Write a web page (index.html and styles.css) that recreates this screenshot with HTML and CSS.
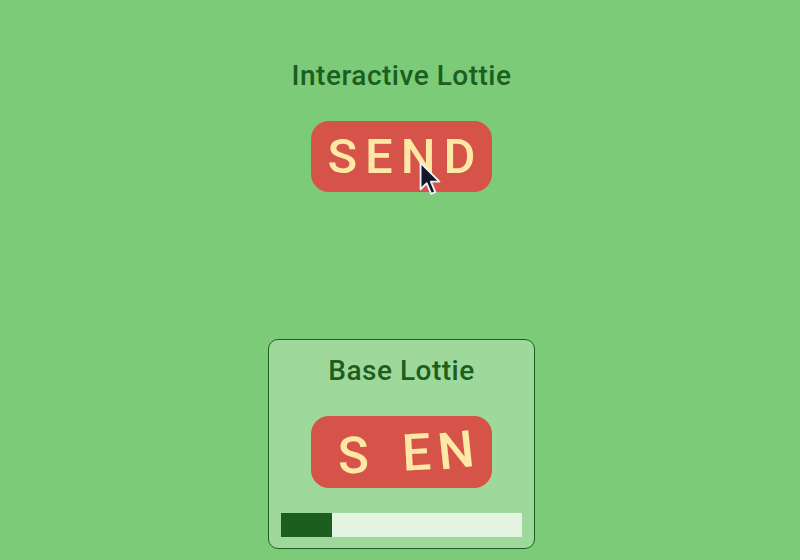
FILE: index.html
```html
<!DOCTYPE html>
<html>
<head>
<meta charset="utf-8">
<link rel="stylesheet" href="styles.css">
</head>
<body>
<div class="page">
  <section class="top">
    <h1 class="title">Interactive Lottie</h1>
    <div class="btn-wrap">
      <div class="send-btn">
        <span class="send-text">SEND</span>
      </div>
      <svg class="cursor" width="24" height="36" viewBox="0 0 13 21">
        <path d="M1 1 L1 16.5 L4.6 13 L7.2 19.2 L9.6 18.2 L7 12 L12 12 Z" fill="#111827" stroke="#eef2f7" stroke-width="1.1" stroke-linejoin="round"/>
      </svg>
    </div>
  </section>
  <section class="card">
    <h2 class="title">Base Lottie</h2>
    <div class="send-btn anim">
      <span class="ltr ltr-s">S</span>
      <span class="ltr ltr-e">E</span>
      <span class="ltr ltr-n">N</span>
    </div>
    <div class="progress">
      <div class="progress-fill" style="width:21%"></div>
    </div>
  </section>
</div>
</body>
</html>
```
FILE: styles.css
```css
* { box-sizing: border-box; }
html, body { margin: 0; padding: 0; }
body {
  background: #7bcb78;
  font-family: Roboto, "Liberation Sans", sans-serif;
}
.page {
  height: 560px;
  padding-left: 3px;
  display: flex;
  flex-direction: column;
  align-items: center;
}
.top {
  padding-top: 60px;
  display: flex;
  flex-direction: column;
  align-items: center;
}
.title {
  margin: 0;
  font-size: 28px;
  line-height: 32px;
  font-weight: 500;
  color: #1b5e20;
  letter-spacing: 0.5px;
}
.btn-wrap {
  position: relative;
  margin-top: 29px;
}
.send-btn {
  width: 181px;
  height: 71px;
  border-radius: 18px;
  background: #d6534a;
  display: flex;
  align-items: center;
  justify-content: center;
  color: #fde8a6;
  font-size: 49px;
  font-weight: 500;
}
.send-text {
  letter-spacing: 8px;
  margin-right: -8px;
  line-height: 1;
}
.cursor {
  position: absolute;
  left: 107px;
  top: 40px;
}
.card {
  margin-top: auto;
  margin-bottom: 11px;
  width: 267px;
  border: 1px solid #1b5e20;
  border-radius: 10px;
  background: #9ed99b;
  padding: 15px 12px 11px;
  display: flex;
  flex-direction: column;
  align-items: center;
}
.card .send-btn {
  margin-top: 29px;
  height: 72px;
}
.anim {
  justify-content: flex-start;
  padding-left: 27px;
  font-size: 51px;
}
.ltr {
  display: inline-block;
  line-height: 1;
}
.ltr-s { transform: translateY(3px) rotate(-2deg); }
.ltr-e { margin-left: 33px; transform: rotate(-3deg); }
.ltr-n { margin-left: 7px; transform: rotate(-6deg) translateY(-2px); }
.progress {
  margin-top: 25px;
  width: 241px;
  height: 24px;
  background: #e4f4e2;
}
.progress-fill {
  height: 100%;
  background: #1b5e20;
}
```
